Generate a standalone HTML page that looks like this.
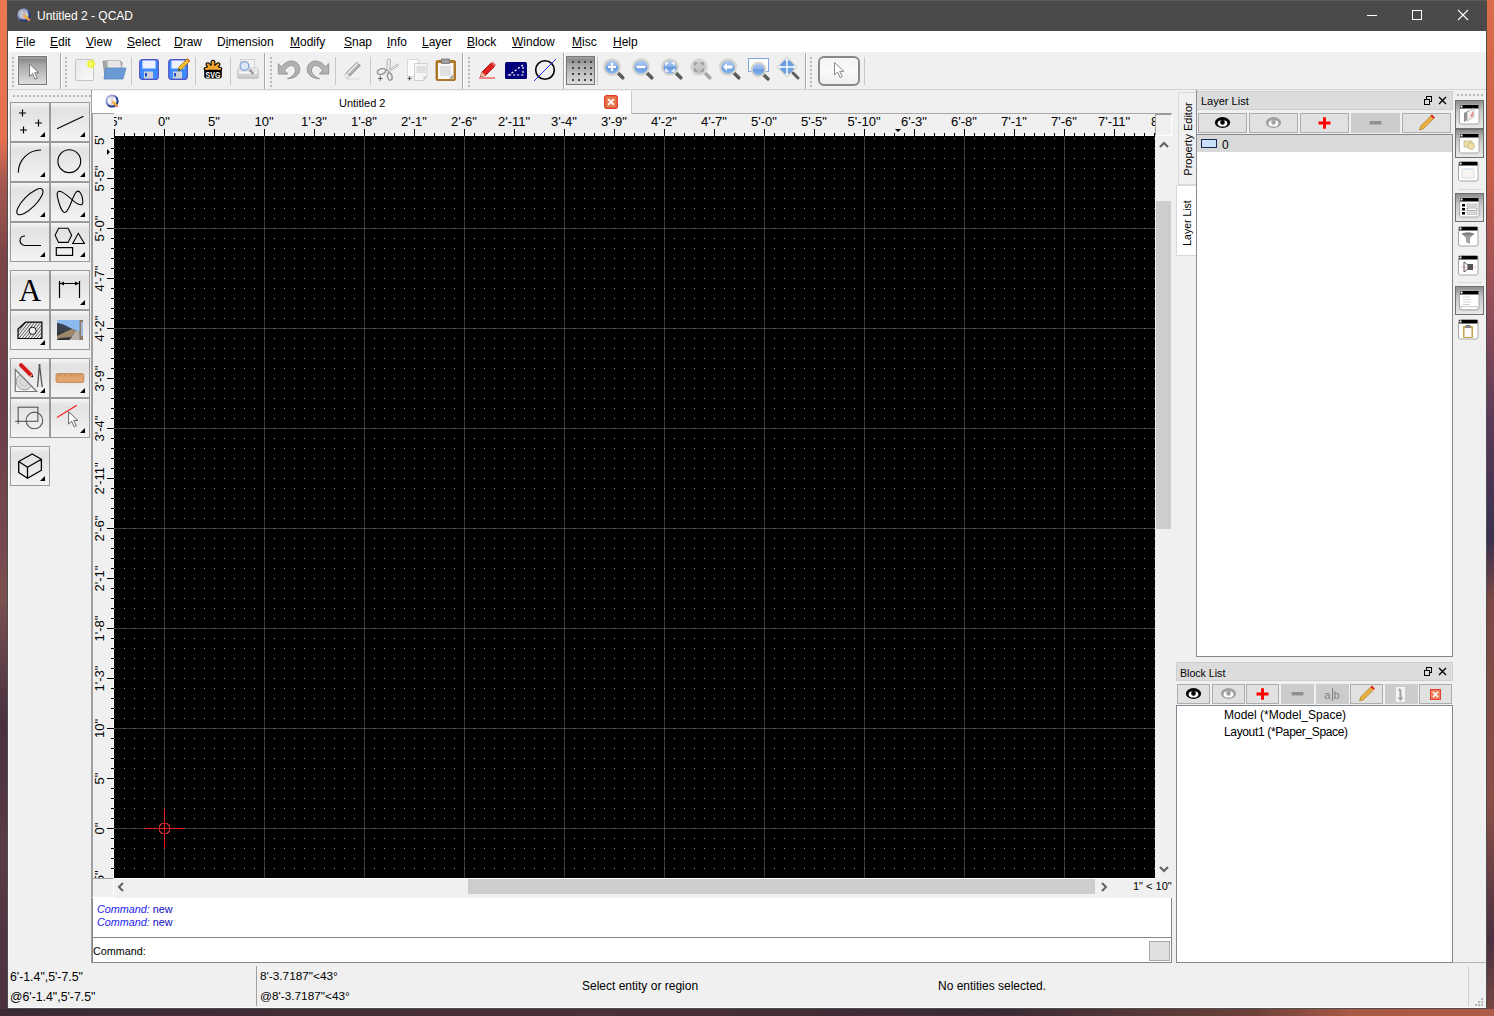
<!DOCTYPE html><html><head><meta charset="utf-8"><style>
*{margin:0;padding:0;box-sizing:border-box}
html,body{width:1494px;height:1016px;overflow:hidden}
body{position:relative;font-family:"Liberation Sans",sans-serif;font-size:12px;color:#000;background:#3d2a35}
div,svg{position:absolute}
.nw{white-space:nowrap;line-height:1}
u{text-decoration:underline;text-underline-offset:1px}
.tb{background:linear-gradient(#f6f6f6 0px,#e6e6e6 5px,#e2e2e2 8px,#f4f4f4 100%);border:1px solid #9a9a9a}
.lb{background:#e1e1e1;border:1px solid #adadad}
.lbd{background:#cccccc}
.hd{width:2px;height:2px;background:#b8b8b8}
</style></head><body>
<div style="left:0;top:0;width:7px;height:1016px;background:linear-gradient(#ec7850 0px,#e47050 140px,#a85850 180px,#7a4548 260px,#6a3c48 400px,#7a5050 600px,#4a3040 720px,#5a3a45 850px,#4a3040 1016px)"></div>
<div style="left:1487px;top:0;width:7px;height:1016px;background:linear-gradient(#da6c4a 0px,#c86048 170px,#9a5058 290px,#5a3a58 420px,#3a3050 540px,#7a4844 600px,#8a5048 800px,#4a3040 940px,#7a4840 1016px)"></div>
<div style="left:0;top:1009px;width:1494px;height:7px;background:linear-gradient(90deg,#3a2a35,#4a3038 600px,#3a2a35 1000px,#6a4038 1250px,#a85844 1350px,#b05a48)"></div>
<div style="left:7px;top:0;width:1480px;height:1009px;background:#f0f0f0;border:1px solid #4e4e4e;border-top:none"></div><div style="left:8px;top:31px;width:1px;height:977px;background:#fafafa"></div><div style="left:8px;top:1007px;width:1478px;height:1px;background:#fafafa"></div><div style="left:1453px;top:962px;width:33px;height:1px;background:#b4b4b4"></div>
<div style="left:7px;top:0;width:1480px;height:31px;background:#4b4a48;border-top:1px solid #5c5b59"></div>
<div class="nw" style="left:37px;top:10px;color:#fff;font-size:12px">Untitled 2 - QCAD</div>
<svg style="left:14px;top:5px" width="20" height="20"><defs><linearGradient id="qr" x1="0" y1="0" x2="1" y2="1"><stop offset="0" stop-color="#c4ccee"/><stop offset=".45" stop-color="#7080c0"/><stop offset=".6" stop-color="#24408c"/><stop offset="1" stop-color="#1a3070"/></linearGradient></defs><circle cx="10" cy="10" r="5.6" fill="#c8c8c8" stroke="url(#qr)" stroke-width="2"/><path d="M8 13h4M10 6v6" stroke="#d06060" stroke-width=".5"/><path d="M10.6 10.6L14.6 14.6" stroke="#f2b030" stroke-width="2.2"/><path d="M14.4 14.4l1.3 1.3" stroke="#f08078" stroke-width="2.3"/></svg>
<div style="left:1367px;top:15px;width:10px;height:1px;background:#fff"></div>
<div style="left:1412px;top:10px;width:10px;height:10px;border:1px solid #fff"></div>
<svg style="left:1457px;top:9px" width="12" height="12"><path d="M1 1L11 11M11 1L1 11" stroke="#fff" stroke-width="1.1"/></svg>
<div style="left:8px;top:31px;width:1478px;height:21px;background:#fff"></div>
<div class="nw" style="left:16px;top:36px;font-size:12px"><u>F</u>ile</div>
<div class="nw" style="left:50px;top:36px;font-size:12px"><u>E</u>dit</div>
<div class="nw" style="left:86px;top:36px;font-size:12px"><u>V</u>iew</div>
<div class="nw" style="left:127px;top:36px;font-size:12px"><u>S</u>elect</div>
<div class="nw" style="left:174px;top:36px;font-size:12px"><u>D</u>raw</div>
<div class="nw" style="left:217px;top:36px;font-size:12px">D<u>i</u>mension</div>
<div class="nw" style="left:290px;top:36px;font-size:12px"><u>M</u>odify</div>
<div class="nw" style="left:344px;top:36px;font-size:12px"><u>S</u>nap</div>
<div class="nw" style="left:387px;top:36px;font-size:12px"><u>I</u>nfo</div>
<div class="nw" style="left:422px;top:36px;font-size:12px"><u>L</u>ayer</div>
<div class="nw" style="left:467px;top:36px;font-size:12px"><u>B</u>lock</div>
<div class="nw" style="left:512px;top:36px;font-size:12px"><u>W</u>indow</div>
<div class="nw" style="left:572px;top:36px;font-size:12px"><u>M</u>isc</div>
<div class="nw" style="left:613px;top:36px;font-size:12px"><u>H</u>elp</div>
<div style="left:8px;top:89px;width:1478px;height:1px;background:#d4d4d4"></div>
<div class="hd" style="left:12px;top:57px"></div>
<div class="hd" style="left:12px;top:61px"></div>
<div class="hd" style="left:12px;top:65px"></div>
<div class="hd" style="left:12px;top:69px"></div>
<div class="hd" style="left:12px;top:73px"></div>
<div class="hd" style="left:12px;top:77px"></div>
<div class="hd" style="left:12px;top:81px"></div>
<div class="hd" style="left:12px;top:85px"></div>
<div class="hd" style="left:65px;top:57px"></div>
<div class="hd" style="left:65px;top:61px"></div>
<div class="hd" style="left:65px;top:65px"></div>
<div class="hd" style="left:65px;top:69px"></div>
<div class="hd" style="left:65px;top:73px"></div>
<div class="hd" style="left:65px;top:77px"></div>
<div class="hd" style="left:65px;top:81px"></div>
<div class="hd" style="left:65px;top:85px"></div>
<div class="hd" style="left:270px;top:57px"></div>
<div class="hd" style="left:270px;top:61px"></div>
<div class="hd" style="left:270px;top:65px"></div>
<div class="hd" style="left:270px;top:69px"></div>
<div class="hd" style="left:270px;top:73px"></div>
<div class="hd" style="left:270px;top:77px"></div>
<div class="hd" style="left:270px;top:81px"></div>
<div class="hd" style="left:270px;top:85px"></div>
<div class="hd" style="left:468px;top:57px"></div>
<div class="hd" style="left:468px;top:61px"></div>
<div class="hd" style="left:468px;top:65px"></div>
<div class="hd" style="left:468px;top:69px"></div>
<div class="hd" style="left:468px;top:73px"></div>
<div class="hd" style="left:468px;top:77px"></div>
<div class="hd" style="left:468px;top:81px"></div>
<div class="hd" style="left:468px;top:85px"></div>
<div class="hd" style="left:810px;top:57px"></div>
<div class="hd" style="left:810px;top:61px"></div>
<div class="hd" style="left:810px;top:65px"></div>
<div class="hd" style="left:810px;top:69px"></div>
<div class="hd" style="left:810px;top:73px"></div>
<div class="hd" style="left:810px;top:77px"></div>
<div class="hd" style="left:810px;top:81px"></div>
<div class="hd" style="left:810px;top:85px"></div>
<div style="left:60px;top:53px;width:1px;height:36px;background:#a8a8a8"></div><div style="left:61px;top:53px;width:1px;height:36px;background:#fff"></div>
<div style="left:264px;top:53px;width:1px;height:36px;background:#a8a8a8"></div><div style="left:265px;top:53px;width:1px;height:36px;background:#fff"></div>
<div style="left:462px;top:53px;width:1px;height:36px;background:#a8a8a8"></div><div style="left:463px;top:53px;width:1px;height:36px;background:#fff"></div>
<div style="left:563px;top:53px;width:1px;height:36px;background:#a8a8a8"></div><div style="left:564px;top:53px;width:1px;height:36px;background:#fff"></div>
<div style="left:805px;top:53px;width:1px;height:36px;background:#a8a8a8"></div><div style="left:806px;top:53px;width:1px;height:36px;background:#fff"></div>
<div style="left:131px;top:57px;width:1px;height:28px;background:#c8c8c8"></div>
<div style="left:195px;top:57px;width:1px;height:28px;background:#c8c8c8"></div>
<div style="left:230px;top:57px;width:1px;height:28px;background:#c8c8c8"></div>
<div style="left:335px;top:57px;width:1px;height:28px;background:#c8c8c8"></div>
<div style="left:370px;top:57px;width:1px;height:28px;background:#c8c8c8"></div>
<div style="left:597px;top:57px;width:1px;height:28px;background:#c8c8c8"></div>
<div style="left:864px;top:57px;width:1px;height:28px;background:#c8c8c8"></div>
<div style="left:18px;top:56px;width:29px;height:29px;border:1px solid #777;background:linear-gradient(#a4a4a4 0px,#8c8c8c 3px,#a8a8a8 8px,#dedede 100%);box-shadow:0 0 0 1px #fafafa"></div>
<svg style="left:18px;top:56px" width="29" height="29" ><path d="M11.5 8v12.5l3-3 2.6 5.6 2.2-1-2.6-5.3h4.2z" fill="#fff" stroke="#777" stroke-width="1" stroke-linejoin="round"/></svg>
<svg style="left:74px;top:58px" width="22" height="24" ><defs><linearGradient id="nd" x1="0" y1="0" x2="1" y2="1"><stop offset="0" stop-color="#e8e8e8"/><stop offset="1" stop-color="#fafafa"/></linearGradient><radialGradient id="sun"><stop offset="0" stop-color="#ffffc0"/><stop offset=".5" stop-color="#f0f020"/><stop offset="1" stop-color="#f0f020" stop-opacity="0"/></radialGradient></defs><rect x="1.5" y="1.5" width="18" height="21" rx="1" fill="url(#nd)" stroke="#c4c4c4"/><circle cx="17" cy="6" r="5" fill="url(#sun)"/></svg>
<svg style="left:101px;top:58px" width="26" height="24" ><path d="M2 3h6l1 1h12l-1 15H4z" fill="#a8a8a8" stroke="#8a8a8a" stroke-width=".8"/><path d="M6 2.5h13.5l1 8h-14z" fill="#e6e6e6" stroke="#b0b0b0" stroke-width=".8"/><path d="M4.5 10h20.5l-3 11h-19z" fill="#6a9ad4" stroke="#5a88c0" stroke-width=".8"/></svg>
<svg style="left:139px;top:59px" width="20" height="21" ><rect x="0.7" y="0.7" width="18.6" height="19.6" rx="2.5" fill="#3c8cff" stroke="#5050c4" stroke-width="1.2"/><rect x="3.5" y="1.5" width="13" height="8" fill="#eef0ff"/><rect x="5" y="12.5" width="9" height="7" fill="#d0d0d8"/><rect x="6" y="14" width="2" height="3.5" fill="#2050d0"/></svg>
<svg style="left:168px;top:59px" width="20" height="21" ><rect x="0.7" y="0.7" width="18.6" height="19.6" rx="2.5" fill="#3c8cff" stroke="#5050c4" stroke-width="1.2"/><rect x="3.5" y="1.5" width="13" height="8" fill="#eef0ff"/><rect x="5" y="12.5" width="9" height="7" fill="#d0d0d8"/><rect x="6" y="14" width="2" height="3.5" fill="#2050d0"/></svg>
<svg style="left:176px;top:57px" width="15" height="16" ><path d="M2 14L3 10L11.5 1.5L14 4L5.5 12.5Z" fill="#f0c030" stroke="#a07010" stroke-width=".8"/><path d="M11.5 1.5L14 4L13 5L10.5 2.5Z" fill="#e87050"/><path d="M2 14L3 11.5L4.5 13Z" fill="#333"/></svg>
<svg style="left:200px;top:57px" width="26" height="26" ><rect x="4.2" y="10.5" width="17.6" height="11" rx="2.2" fill="#000"/><g fill="#f5a630" stroke="#000" stroke-width="1.1"><ellipse cx="13" cy="6.3" rx="2" ry="3"/><ellipse cx="8.6" cy="8.3" rx="1.8" ry="2.9" transform="rotate(-45 8.6 8.3)"/><ellipse cx="17.4" cy="8.3" rx="1.8" ry="2.9" transform="rotate(45 17.4 8.3)"/><ellipse cx="6.8" cy="11.8" rx="2.6" ry="1.5"/><ellipse cx="19.2" cy="11.8" rx="2.6" ry="1.5"/></g><path d="M5 12.8h16l-3.5-3.2-4.5-1.8-4.5 1.8z" fill="#f5a630"/><text transform="translate(13 20.8) scale(.82 1.12)" font-family="Liberation Sans" font-weight="bold" font-size="8.6" fill="#fff" text-anchor="middle">SVG</text></svg>
<svg style="left:234px;top:56px" width="28" height="28" ><defs><linearGradient id="pr" x1="0" y1="0" x2="0" y2="1"><stop offset="0" stop-color="#f0f0f0"/><stop offset="1" stop-color="#c4c4c4"/></linearGradient></defs><rect x="6.5" y="3.5" width="14" height="10" fill="#f2f2f2" stroke="#cfcfcf"/><rect x="3.5" y="12" width="21" height="10.5" rx="2" fill="url(#pr)" stroke="#c0c0c0" stroke-width=".8"/><rect x="5" y="16" width="18" height="1.5" fill="#f8f8f8"/><path d="M15.5 13.5l4 4.5" stroke="#9c9c9c" stroke-width="2.6"/><circle cx="10.5" cy="10" r="4.4" fill="#dce8f6" stroke="#7aa0d8" stroke-width="1.3"/></svg>
<svg style="left:276px;top:57px" width="26" height="26" ><path d="M2.3 6.6L5.5 10C8 6.5 11.5 4 15.5 4C20 4 23.8 7.5 23.8 12.5C23.8 17.5 19 21.5 11.5 21.7C16 20 19.5 17 19.5 13.5C19.5 10.5 17.5 8.5 15.5 8.5C12.5 8.5 10.5 10.5 8.5 13.5L11.8 17H2.3Z" fill="#b2b2b2" stroke="#8e8e8e" stroke-width=".9" stroke-linejoin="round"/></svg>
<svg style="left:305px;top:57px" width="26" height="26" ><g transform="translate(26,0) scale(-1,1)"><path d="M2.3 6.6L5.5 10C8 6.5 11.5 4 15.5 4C20 4 23.8 7.5 23.8 12.5C23.8 17.5 19 21.5 11.5 21.7C16 20 19.5 17 19.5 13.5C19.5 10.5 17.5 8.5 15.5 8.5C12.5 8.5 10.5 10.5 8.5 13.5L11.8 17H2.3Z" fill="#b2b2b2" stroke="#8e8e8e" stroke-width=".9" stroke-linejoin="round"/></g></svg>
<svg style="left:342px;top:59px" width="22" height="22" ><path d="M4 14L15 3l3.5 3.5L7.5 17.5z" fill="#b0b0b0" stroke="#909090" stroke-width=".8"/><path d="M5.5 14.5L16 4" stroke="#f4f4f4" stroke-width="1.4"/><path d="M4 14l3.5 3.5-2.5 1.5-2.5-2.5z" fill="#f8f8f8" stroke="#b8b8b8" stroke-width=".8"/><path d="M4 20h14" stroke="#dcdcdc" stroke-width="1.2"/></svg>
<svg style="left:374px;top:56px" width="28" height="28" ><path d="M13 13.5L13.2 4C13.5 2.8 16.5 2.8 16.6 4L15.7 14" fill="#f2f2f2" stroke="#a8a8a8" stroke-width=".9"/><path d="M15.5 13.5L23 8c1-.5 1.8.8 1 1.8L16 15" fill="#f2f2f2" stroke="#a8a8a8" stroke-width=".9"/><ellipse cx="7.5" cy="15.5" rx="4.3" ry="2.6" transform="rotate(-20 7.5 15.5)" fill="none" stroke="#9a9a9a" stroke-width="1.5"/><path d="M11.5 14.5L14 14M14.5 14.5L15 17" stroke="#9a9a9a" stroke-width="1.5"/><ellipse cx="15.8" cy="20.5" rx="2.2" ry="3.7" transform="rotate(-15 15.8 20.5)" fill="none" stroke="#9a9a9a" stroke-width="1.5"/><path d="M4 22.5h4.6M6.3 20.2v4.6" stroke="#666" stroke-width="1.1"/></svg>
<svg style="left:405px;top:58px" width="25" height="25" ><path d="M2.5 1.5h11v17h-11z" fill="#fbfbfb" stroke="#d8d8d8"/><path d="M9.5 5.5h12.5v13l-3.5 4H9.5z" fill="#f6f6f6" stroke="#d0d0d0"/><rect x="11.5" y="8" width="9" height="7" fill="#e0e0e0"/><path d="M18.5 22.5v-4h3.5z" fill="#c8c8c8"/><path d="M2.5 20.5h4M4.5 18.5v4" stroke="#555" stroke-width="1.1"/></svg>
<svg style="left:435px;top:57px" width="22" height="25" ><rect x="1" y="3.5" width="19.5" height="20" rx="1.5" fill="#b47a22" stroke="#9a6418" stroke-width=".8"/><rect x="3" y="6" width="15.5" height="16" fill="#f8f8f8"/><rect x="5" y="9" width="11" height="10" fill="#e0e0e0"/><path d="M6.5 2h8v4.5h-8z" fill="#a0a0a0" stroke="#707070" stroke-width=".8"/><path d="M14 21.5l4-4v4z" fill="#a0a0a0"/></svg>
<svg style="left:478px;top:60px" width="19" height="20" ><path d="M2.5 16.5L4 12 13 3l3.5 3.5-9 9z" fill="#e02020" stroke="#901010" stroke-width=".8"/><path d="M13 3l1.5-1.5 3.5 3.5-1.5 1.5z" fill="#f06060"/><path d="M2.5 16.5L4 12l3.5 3.5z" fill="#f0c090"/><path d="M1 18h16" stroke="#f04040" stroke-width="1.2"/></svg>
<svg style="left:505px;top:62px" width="22" height="17" ><rect x="0" y="0" width="22" height="17" rx="1.5" fill="#00007a"/><path d="M4 13h14V3z" fill="none" stroke="#fff" stroke-width="1.2" stroke-dasharray="2.2 1.8"/></svg>
<svg style="left:533px;top:58px" width="24" height="24" ><circle cx="12" cy="12" r="9.3" fill="none" stroke="#000" stroke-width="1.6"/><path d="M1 23L23 1" stroke="#2a2aff" stroke-width="1"/></svg>
<div style="left:566px;top:56px;width:29px;height:29px;border:1px solid #777;background:linear-gradient(#a4a4a4 0px,#8c8c8c 3px,#a8a8a8 8px,#dedede 100%)"></div>
<div style="left:572px;top:61px;width:2px;height:2px;background:#444"></div>
<div style="left:578px;top:61px;width:2px;height:2px;background:#444"></div>
<div style="left:584px;top:61px;width:2px;height:2px;background:#444"></div>
<div style="left:590px;top:61px;width:2px;height:2px;background:#444"></div>
<div style="left:572px;top:67px;width:2px;height:2px;background:#444"></div>
<div style="left:578px;top:67px;width:2px;height:2px;background:#444"></div>
<div style="left:584px;top:67px;width:2px;height:2px;background:#444"></div>
<div style="left:590px;top:67px;width:2px;height:2px;background:#444"></div>
<div style="left:572px;top:73px;width:2px;height:2px;background:#444"></div>
<div style="left:578px;top:73px;width:2px;height:2px;background:#444"></div>
<div style="left:584px;top:73px;width:2px;height:2px;background:#444"></div>
<div style="left:590px;top:73px;width:2px;height:2px;background:#444"></div>
<div style="left:572px;top:79px;width:2px;height:2px;background:#444"></div>
<div style="left:578px;top:79px;width:2px;height:2px;background:#444"></div>
<div style="left:584px;top:79px;width:2px;height:2px;background:#444"></div>
<div style="left:590px;top:79px;width:2px;height:2px;background:#444"></div>
<svg width="0" height="0" style="left:0;top:0"><defs><linearGradient id="lg" x1="0" y1="0" x2="0" y2="1"><stop offset="0" stop-color="#b4d0f4"/><stop offset=".45" stop-color="#8cb2e8"/><stop offset=".52" stop-color="#6898de"/><stop offset="1" stop-color="#8cbcf2"/></linearGradient><linearGradient id="lgg" x1="0" y1="0" x2="0" y2="1"><stop offset="0" stop-color="#d4d4d4"/><stop offset="1" stop-color="#bcbcbc"/></linearGradient></defs></svg>
<svg style="left:601px;top:56px" width="26" height="26" ><path d="M17.2 17.2l4.6 4.6" stroke="#5a5e5a" stroke-width="3.6" stroke-linecap="round"/><circle cx="11" cy="11" r="7.7" fill="url(#lg)" stroke="#d4d4cc" stroke-width="2.2"/><path d="M7 11h8M11 7v8" stroke="#fff" stroke-width="2.2"/></svg>
<svg style="left:630px;top:56px" width="26" height="26" ><path d="M17.2 17.2l4.6 4.6" stroke="#5a5e5a" stroke-width="3.6" stroke-linecap="round"/><circle cx="11" cy="11" r="7.7" fill="url(#lg)" stroke="#d4d4cc" stroke-width="2.2"/><path d="M6.5 11h9" stroke="#fff" stroke-width="2.4"/></svg>
<svg style="left:659px;top:56px" width="26" height="26" ><path d="M17.2 17.2l4.6 4.6" stroke="#5a5e5a" stroke-width="3.6" stroke-linecap="round"/><circle cx="11" cy="11" r="7.7" fill="url(#lg)" stroke="#d4d4cc" stroke-width="2.2"/><path d="M7 9.5V7h2.5M12.5 7H15v2.5M15 12.5V15h-2.5M9.5 15H7v-2.5" fill="none" stroke="#fff" stroke-width="1.4"/></svg>
<svg style="left:688px;top:56px" width="26" height="26" ><path d="M17.2 17.2l4.6 4.6" stroke="#a8a8a8" stroke-width="3.6" stroke-linecap="round"/><circle cx="11" cy="11" r="7.7" fill="url(#lgg)" stroke="#d8d8d8" stroke-width="2.2"/><path d="M7 9.5V7h2.5M12.5 7H15v2.5M15 12.5V15h-2.5M9.5 15H7v-2.5" fill="none" stroke="#9a9a9a" stroke-width="1.6"/></svg>
<svg style="left:717px;top:56px" width="26" height="26" ><path d="M17.2 17.2l4.6 4.6" stroke="#5a5e5a" stroke-width="3.6" stroke-linecap="round"/><circle cx="11" cy="11" r="7.7" fill="url(#lg)" stroke="#d4d4cc" stroke-width="2.2"/><path d="M6 11l4-4v2.5h5.5v3H10V15z" fill="#fff"/></svg>
<svg style="left:747px;top:57px" width="24" height="25" ><rect x="1.5" y="1.5" width="20" height="13" fill="#fff" stroke="#80a8e0"/><path d="M16.5 17.5l4.5 4.5" stroke="#5a5e5a" stroke-width="3.4" stroke-linecap="round"/><circle cx="11.5" cy="12.5" r="6.8" fill="url(#lg)" stroke="#d4d4cc" stroke-width="2"/></svg>
<svg style="left:775px;top:56px" width="26" height="26" ><path d="M12 1l10 10-10 10L2 11z" fill="#6a9ee0" stroke="#d8d8d0" stroke-width="1.2"/><path d="M12 3v16M4 11h16" stroke="#fff" stroke-width="1.4"/><path d="M12 1.5l-2 3h4zM12 20.5l-2-3h4zM2.5 11l3-2v4zM21.5 11l-3-2v4z" fill="#fff"/><path d="M18 17l5 5" stroke="#5c615c" stroke-width="3" stroke-linecap="round"/></svg>
<div style="left:818px;top:56px;width:42px;height:30px;border:2px solid #888;border-radius:6px;background:linear-gradient(#f4f4f4,#fafafa 50%,#eeeeee)"></div>
<svg style="left:818px;top:56px" width="42" height="30" ><path d="M16.5 6.5v12.5l3-3 2.6 5.6 2.2-1-2.6-5.3h4.2z" fill="#fff" stroke="#888" stroke-width="1" stroke-linejoin="round"/></svg>
<div class="hd" style="left:13px;top:95px"></div>
<div class="hd" style="left:17px;top:95px"></div>
<div class="hd" style="left:21px;top:95px"></div>
<div class="hd" style="left:25px;top:95px"></div>
<div class="hd" style="left:29px;top:95px"></div>
<div class="hd" style="left:33px;top:95px"></div>
<div class="hd" style="left:37px;top:95px"></div>
<div class="hd" style="left:41px;top:95px"></div>
<div class="hd" style="left:45px;top:95px"></div>
<div class="hd" style="left:49px;top:95px"></div>
<div class="hd" style="left:53px;top:95px"></div>
<div class="hd" style="left:57px;top:95px"></div>
<div class="hd" style="left:61px;top:95px"></div>
<div class="hd" style="left:65px;top:95px"></div>
<div class="hd" style="left:69px;top:95px"></div>
<div class="hd" style="left:73px;top:95px"></div>
<div class="hd" style="left:77px;top:95px"></div>
<div class="hd" style="left:81px;top:95px"></div>
<div class="hd" style="left:85px;top:95px"></div>
<div class="hd" style="left:89px;top:95px"></div>
<div class="tb" style="left:10px;top:102px;width:40px;height:40px"></div>
<svg style="left:10px;top:102px" width="40" height="40" ><path d="M9 11h7M12.5 7.5v7M25 21h7M28.5 17.5v7M10 28h7M13.5 24.5v7" stroke="#000" stroke-width="1.2"/><path d="M30 35h5v-5z" fill="#000"/></svg>
<div class="tb" style="left:50px;top:102px;width:40px;height:40px"></div>
<svg style="left:50px;top:102px" width="40" height="40" ><path d="M7 26.8L33.5 14.3" stroke="#000" fill="none" stroke-width="1.1"/><path d="M30 35h5v-5z" fill="#000"/></svg>
<div class="tb" style="left:10px;top:142px;width:40px;height:40px"></div>
<svg style="left:10px;top:142px" width="40" height="40" ><path d="M8.3 30.7A22.5 22.5 0 0 1 31 8" stroke="#000" fill="none" stroke-width="1.1"/><path d="M30 35h5v-5z" fill="#000"/></svg>
<div class="tb" style="left:50px;top:142px;width:40px;height:40px"></div>
<svg style="left:50px;top:142px" width="40" height="40" ><circle cx="19.3" cy="19.2" r="11.4" stroke="#000" fill="none" stroke-width="1.1"/><path d="M30 35h5v-5z" fill="#000"/></svg>
<div class="tb" style="left:10px;top:182px;width:40px;height:40px"></div>
<svg style="left:10px;top:182px" width="40" height="40" ><ellipse cx="19.9" cy="19.7" rx="17.5" ry="6" transform="rotate(-45 19.9 19.7)" stroke="#000" fill="none" stroke-width="1.1"/><path d="M30 35h5v-5z" fill="#000"/></svg>
<div class="tb" style="left:50px;top:182px;width:40px;height:40px"></div>
<svg style="left:50px;top:182px" width="40" height="40" ><path d="M9.5 9.3C13 9.5 19 15 22.8 18.3C26 21 29 23 31.5 22.7C34 22 32.5 14 30.5 11C29 8.5 27 8.5 25.5 11C22 16 19 30 14.8 30.5C12 30.5 9 22 7.5 15C6.5 11 7.5 9.3 9.5 9.3Z" stroke="#000" fill="none" stroke-width="1.1"/><path d="M30 35h5v-5z" fill="#000"/></svg>
<div class="tb" style="left:10px;top:222px;width:40px;height:40px"></div>
<svg style="left:10px;top:222px" width="40" height="40" ><path d="M15 14c-3 0-5 2-5 4.5s2.3 5 4.5 5H31" stroke="#000" fill="none" stroke-width="1.2"/><path d="M30 35h5v-5z" fill="#000"/></svg>
<div class="tb" style="left:50px;top:222px;width:40px;height:40px"></div>
<svg style="left:50px;top:222px" width="40" height="40" ><path d="M5.1 13.35L8.6 6.3H18.1L21.6 13.35 18.1 20.4H8.6Z" stroke="#000" fill="none" stroke-width="1.1"/><path d="M22.7 21.5H34.4L28.3 11.3z" stroke="#000" fill="none" stroke-width="1.1"/><rect x="6.3" y="25.6" width="16.3" height="7.8" stroke="#000" fill="none" stroke-width="1.2"/><path d="M30 35h5v-5z" fill="#000"/></svg>
<div class="tb" style="left:10px;top:270px;width:40px;height:40px"></div>
<svg style="left:10px;top:270px" width="40" height="40" ><text x="20" y="31" font-family="Liberation Serif" font-size="31" text-anchor="middle" fill="#000">A</text></svg>
<div class="tb" style="left:50px;top:270px;width:40px;height:40px"></div>
<svg style="left:50px;top:270px" width="40" height="40" ><path d="M9.5 11v17M29.5 11v17M10 13.5h19" stroke="#000" stroke-width="1.2" fill="none"/><path d="M10 13.5l4-2v4zM29 13.5l-4-2v4z" fill="#000"/><path d="M30 35h5v-5z" fill="#000"/></svg>
<div class="tb" style="left:10px;top:310px;width:40px;height:40px"></div>
<svg style="left:10px;top:310px" width="40" height="40" ><defs><clipPath id="hc"><path d="M8 19L15.6 12.2H31.9V28.5H8z"/></clipPath></defs><g clip-path="url(#hc)"><path d="M0 32L16 12" stroke="#000" stroke-width=".6"/><path d="M3 32L19 12" stroke="#000" stroke-width=".6"/><path d="M6 32L22 12" stroke="#000" stroke-width=".6"/><path d="M9 32L25 12" stroke="#000" stroke-width=".6"/><path d="M12 32L28 12" stroke="#000" stroke-width=".6"/><path d="M15 32L31 12" stroke="#000" stroke-width=".6"/><path d="M18 32L34 12" stroke="#000" stroke-width=".6"/><path d="M21 32L37 12" stroke="#000" stroke-width=".6"/><path d="M24 32L40 12" stroke="#000" stroke-width=".6"/><path d="M27 32L43 12" stroke="#000" stroke-width=".6"/><path d="M30 32L46 12" stroke="#000" stroke-width=".6"/><path d="M33 32L49 12" stroke="#000" stroke-width=".6"/></g><path d="M8 19L15.6 12.2H31.9V28.5H8z" fill="none" stroke="#000" stroke-width="1.2"/><circle cx="22.6" cy="20.8" r="3.6" fill="#f0f0f0" stroke="#000" stroke-width=".9"/><path d="M30 35h5v-5z" fill="#000"/></svg>
<div class="tb" style="left:50px;top:310px;width:40px;height:40px"></div>
<svg style="left:50px;top:310px" width="40" height="40" ><rect x="7" y="10" width="26" height="20" fill="#2c323a"/><path d="M7 10H30V22L21 18.5 13 14.5 7 13Z" fill="#8cbaee"/><path d="M7 13L13 14.5 21 18.5 24 20 7 22Z" fill="#3a4250"/><path d="M7 26L15 22 22 19 26 20.5 20 28 7 29Z" fill="#9c8868"/><path d="M19 30L26 20.5 29.5 21.5 30.5 30Z" fill="#b4b0a8"/><rect x="29.5" y="10" width="3.5" height="20" fill="#8a7a66"/><rect x="31" y="12" width="2" height="14" fill="#a0b8d8"/><path d="M10 28L22 27 19 30H7Z" fill="#30343a"/></svg>
<div class="tb" style="left:10px;top:358px;width:40px;height:40px"></div>
<svg style="left:10px;top:358px" width="40" height="40" ><path d="M5.3 11.5V33.5H26.8Z" fill="#f2f2f2"/><defs><clipPath id="trc"><path d="M5.3 11.5V33.5H26.8Z"/></clipPath></defs><g clip-path="url(#trc)"><circle cx="14.5" cy="23.5" r="8.3" fill="#dcdcdc" stroke="#9a9a9a" stroke-width="1"/><circle cx="14.5" cy="23.5" r="4.5" fill="none" stroke="#c0c0c0" stroke-width=".8"/></g><path d="M5.3 11.5V33.5H26.8Z" fill="none" stroke="#7a7a7a" stroke-width="1.2"/><path d="M11 7.2L21 17.2" stroke="#d81818" stroke-width="4" stroke-linecap="round"/><path d="M19.5 18.5l2-2 1.8 2.2z" fill="#f0c8a8"/><circle cx="22.3" cy="18.3" r=".9" fill="#000"/><path d="M29.5 6.5L27.5 29M29.5 6.5L32.2 29" stroke="#555" stroke-width="1.3" fill="none"/><circle cx="29.5" cy="7" r="1.1" fill="#555"/><path d="M30 35h5v-5z" fill="#000"/></svg>
<div class="tb" style="left:50px;top:358px;width:40px;height:40px"></div>
<svg style="left:50px;top:358px" width="40" height="40" ><rect x="6" y="15.6" width="27.8" height="8.9" rx="1.5" fill="#e0a46c" stroke="#b88050" stroke-width=".8"/><path d="M9 16v2.5M12 16v1.5M15 16v2.5M18 16v1.5M21 16v2.5M24 16v1.5M27 16v2.5M30 16v1.5" stroke="#b07848" stroke-width=".8"/><path d="M30 35h5v-5z" fill="#000"/></svg>
<div class="tb" style="left:10px;top:398px;width:40px;height:40px"></div>
<svg style="left:10px;top:398px" width="40" height="40" ><rect x="8.2" y="9.2" width="19.7" height="14.1" fill="none" stroke="#555" stroke-width="1.1"/><circle cx="24.4" cy="22.4" r="8.3" fill="none" stroke="#555" stroke-width="1.1"/><path d="M5 23.3h4M8.2 22v4" stroke="#555" stroke-width="1"/></svg>
<div class="tb" style="left:50px;top:398px;width:40px;height:40px"></div>
<svg style="left:50px;top:398px" width="40" height="40" ><path d="M7 19.4L26.8 7.2" stroke="#ff2020" stroke-width="1.2"/><path d="M18.6 13.7v12.5l3-3 2.6 5.6 2.2-1-2.6-5.3h4.2z" fill="#fff" stroke="#666" stroke-width="1" stroke-linejoin="round"/><path d="M30 35h5v-5z" fill="#000"/></svg>
<div class="tb" style="left:10px;top:446px;width:40px;height:40px"></div>
<svg style="left:10px;top:446px" width="40" height="40" ><path d="M22.2 8L8.7 15.5V26.5L17.5 32.2 31.4 24.3V13.3z M8.7 15.5L17.5 21.2 31.4 13.3 M17.5 21.2V32.2" fill="none" stroke="#000" stroke-width="1.3" stroke-linejoin="round"/><path d="M30 35h5v-5z" fill="#000"/></svg>
<div style="left:91px;top:90px;width:1px;height:873px;background:#a0a0a0"></div>
<div style="left:92px;top:91px;width:539px;height:23px;background:#fff"></div>
<svg style="left:102px;top:91px" width="20" height="20"><defs><linearGradient id="qr2" x1="0" y1="0" x2="1" y2="1"><stop offset="0" stop-color="#c4ccee"/><stop offset=".45" stop-color="#7080c0"/><stop offset=".6" stop-color="#24408c"/><stop offset="1" stop-color="#1a3070"/></linearGradient></defs><circle cx="10" cy="10" r="5.6" fill="#f4f4f4" stroke="url(#qr2)" stroke-width="2"/><path d="M8 13h4M10 6v6" stroke="#d06060" stroke-width=".5"/><path d="M10.6 10.6L14.6 14.6" stroke="#f2b030" stroke-width="2.2"/><path d="M14.4 14.4l1.3 1.3" stroke="#f08078" stroke-width="2.3"/></svg>
<div class="nw" style="left:339px;top:98px;font-size:11px">Untitled 2</div>
<svg style="left:604px;top:95px" width="14" height="14" ><rect x=".7" y=".7" width="12.6" height="12.6" rx="2" fill="#e8784e" stroke="#e03c24" stroke-width="1.3"/><path d="M4.2 4.2L9.8 9.8M9.8 4.2L4.2 9.8" stroke="#fff" stroke-width="1.9"/></svg>
<svg style="left:114px;top:136px" width="1041" height="742" shape-rendering="crispEdges"><defs><pattern id="dots" x="0" y="0" width="10" height="10" patternUnits="userSpaceOnUse"><rect x="0" y="2" width="1" height="1" fill="#8c8c8c"/></pattern></defs><rect width="1041" height="742" fill="#000"/><rect x="50" y="0" width="1" height="742" fill="#383838"/><rect x="150" y="0" width="1" height="742" fill="#383838"/><rect x="250" y="0" width="1" height="742" fill="#383838"/><rect x="350" y="0" width="1" height="742" fill="#383838"/><rect x="450" y="0" width="1" height="742" fill="#383838"/><rect x="550" y="0" width="1" height="742" fill="#383838"/><rect x="650" y="0" width="1" height="742" fill="#383838"/><rect x="750" y="0" width="1" height="742" fill="#383838"/><rect x="850" y="0" width="1" height="742" fill="#383838"/><rect x="950" y="0" width="1" height="742" fill="#383838"/><rect x="0" y="92" width="1041" height="1" fill="#383838"/><rect x="0" y="192" width="1041" height="1" fill="#383838"/><rect x="0" y="292" width="1041" height="1" fill="#383838"/><rect x="0" y="392" width="1041" height="1" fill="#383838"/><rect x="0" y="492" width="1041" height="1" fill="#383838"/><rect x="0" y="592" width="1041" height="1" fill="#383838"/><rect x="0" y="692" width="1041" height="1" fill="#383838"/><rect x="30" y="692" width="41" height="1" fill="#e81010"/><rect x="50" y="672" width="1" height="41" fill="#e81010"/><circle cx="50.5" cy="692.5" r="5.5" fill="none" stroke="#b83030" stroke-width="1"/><rect x="0" width="1041" height="742" fill="url(#dots)"/></svg>
<div style="left:92px;top:114px;width:1064px;height:22px;background:#f0f0f0"></div>
<div style="left:114px;top:114px;width:1041px;height:22px;overflow:hidden"><div class="nw" style="left:-40px;top:1px;width:80px;text-align:center;font-size:13px">-5"</div><div class="nw" style="left:10px;top:1px;width:80px;text-align:center;font-size:13px">0"</div><div class="nw" style="left:60px;top:1px;width:80px;text-align:center;font-size:13px">5"</div><div class="nw" style="left:110px;top:1px;width:80px;text-align:center;font-size:13px">10"</div><div class="nw" style="left:160px;top:1px;width:80px;text-align:center;font-size:13px">1'-3"</div><div class="nw" style="left:210px;top:1px;width:80px;text-align:center;font-size:13px">1'-8"</div><div class="nw" style="left:260px;top:1px;width:80px;text-align:center;font-size:13px">2'-1"</div><div class="nw" style="left:310px;top:1px;width:80px;text-align:center;font-size:13px">2'-6"</div><div class="nw" style="left:360px;top:1px;width:80px;text-align:center;font-size:13px">2'-11"</div><div class="nw" style="left:410px;top:1px;width:80px;text-align:center;font-size:13px">3'-4"</div><div class="nw" style="left:460px;top:1px;width:80px;text-align:center;font-size:13px">3'-9"</div><div class="nw" style="left:510px;top:1px;width:80px;text-align:center;font-size:13px">4'-2"</div><div class="nw" style="left:560px;top:1px;width:80px;text-align:center;font-size:13px">4'-7"</div><div class="nw" style="left:610px;top:1px;width:80px;text-align:center;font-size:13px">5'-0"</div><div class="nw" style="left:660px;top:1px;width:80px;text-align:center;font-size:13px">5'-5"</div><div class="nw" style="left:710px;top:1px;width:80px;text-align:center;font-size:13px">5'-10"</div><div class="nw" style="left:760px;top:1px;width:80px;text-align:center;font-size:13px">6'-3"</div><div class="nw" style="left:810px;top:1px;width:80px;text-align:center;font-size:13px">6'-8"</div><div class="nw" style="left:860px;top:1px;width:80px;text-align:center;font-size:13px">7'-1"</div><div class="nw" style="left:910px;top:1px;width:80px;text-align:center;font-size:13px">7'-6"</div><div class="nw" style="left:960px;top:1px;width:80px;text-align:center;font-size:13px">7'-11"</div><div class="nw" style="left:1010px;top:1px;width:80px;text-align:center;font-size:13px">8'-4"</div></div>
<svg style="left:114px;top:114px" width="1042" height="22" shape-rendering="crispEdges"><rect x="0" y="21" width="1042" height="1" fill="#fff"/><rect x="0" y="15" width="1" height="7" fill="#000"/><rect x="10" y="19" width="1" height="3" fill="#000"/><rect x="20" y="19" width="1" height="3" fill="#000"/><rect x="30" y="19" width="1" height="3" fill="#000"/><rect x="40" y="19" width="1" height="3" fill="#000"/><rect x="50" y="15" width="1" height="7" fill="#000"/><rect x="60" y="19" width="1" height="3" fill="#000"/><rect x="70" y="19" width="1" height="3" fill="#000"/><rect x="80" y="19" width="1" height="3" fill="#000"/><rect x="90" y="19" width="1" height="3" fill="#000"/><rect x="100" y="15" width="1" height="7" fill="#000"/><rect x="110" y="19" width="1" height="3" fill="#000"/><rect x="120" y="19" width="1" height="3" fill="#000"/><rect x="130" y="19" width="1" height="3" fill="#000"/><rect x="140" y="19" width="1" height="3" fill="#000"/><rect x="150" y="15" width="1" height="7" fill="#000"/><rect x="160" y="19" width="1" height="3" fill="#000"/><rect x="170" y="19" width="1" height="3" fill="#000"/><rect x="180" y="19" width="1" height="3" fill="#000"/><rect x="190" y="19" width="1" height="3" fill="#000"/><rect x="200" y="15" width="1" height="7" fill="#000"/><rect x="210" y="19" width="1" height="3" fill="#000"/><rect x="220" y="19" width="1" height="3" fill="#000"/><rect x="230" y="19" width="1" height="3" fill="#000"/><rect x="240" y="19" width="1" height="3" fill="#000"/><rect x="250" y="15" width="1" height="7" fill="#000"/><rect x="260" y="19" width="1" height="3" fill="#000"/><rect x="270" y="19" width="1" height="3" fill="#000"/><rect x="280" y="19" width="1" height="3" fill="#000"/><rect x="290" y="19" width="1" height="3" fill="#000"/><rect x="300" y="15" width="1" height="7" fill="#000"/><rect x="310" y="19" width="1" height="3" fill="#000"/><rect x="320" y="19" width="1" height="3" fill="#000"/><rect x="330" y="19" width="1" height="3" fill="#000"/><rect x="340" y="19" width="1" height="3" fill="#000"/><rect x="350" y="15" width="1" height="7" fill="#000"/><rect x="360" y="19" width="1" height="3" fill="#000"/><rect x="370" y="19" width="1" height="3" fill="#000"/><rect x="380" y="19" width="1" height="3" fill="#000"/><rect x="390" y="19" width="1" height="3" fill="#000"/><rect x="400" y="15" width="1" height="7" fill="#000"/><rect x="410" y="19" width="1" height="3" fill="#000"/><rect x="420" y="19" width="1" height="3" fill="#000"/><rect x="430" y="19" width="1" height="3" fill="#000"/><rect x="440" y="19" width="1" height="3" fill="#000"/><rect x="450" y="15" width="1" height="7" fill="#000"/><rect x="460" y="19" width="1" height="3" fill="#000"/><rect x="470" y="19" width="1" height="3" fill="#000"/><rect x="480" y="19" width="1" height="3" fill="#000"/><rect x="490" y="19" width="1" height="3" fill="#000"/><rect x="500" y="15" width="1" height="7" fill="#000"/><rect x="510" y="19" width="1" height="3" fill="#000"/><rect x="520" y="19" width="1" height="3" fill="#000"/><rect x="530" y="19" width="1" height="3" fill="#000"/><rect x="540" y="19" width="1" height="3" fill="#000"/><rect x="550" y="15" width="1" height="7" fill="#000"/><rect x="560" y="19" width="1" height="3" fill="#000"/><rect x="570" y="19" width="1" height="3" fill="#000"/><rect x="580" y="19" width="1" height="3" fill="#000"/><rect x="590" y="19" width="1" height="3" fill="#000"/><rect x="600" y="15" width="1" height="7" fill="#000"/><rect x="610" y="19" width="1" height="3" fill="#000"/><rect x="620" y="19" width="1" height="3" fill="#000"/><rect x="630" y="19" width="1" height="3" fill="#000"/><rect x="640" y="19" width="1" height="3" fill="#000"/><rect x="650" y="15" width="1" height="7" fill="#000"/><rect x="660" y="19" width="1" height="3" fill="#000"/><rect x="670" y="19" width="1" height="3" fill="#000"/><rect x="680" y="19" width="1" height="3" fill="#000"/><rect x="690" y="19" width="1" height="3" fill="#000"/><rect x="700" y="15" width="1" height="7" fill="#000"/><rect x="710" y="19" width="1" height="3" fill="#000"/><rect x="720" y="19" width="1" height="3" fill="#000"/><rect x="730" y="19" width="1" height="3" fill="#000"/><rect x="740" y="19" width="1" height="3" fill="#000"/><rect x="750" y="15" width="1" height="7" fill="#000"/><rect x="760" y="19" width="1" height="3" fill="#000"/><rect x="770" y="19" width="1" height="3" fill="#000"/><rect x="780" y="19" width="1" height="3" fill="#000"/><rect x="790" y="19" width="1" height="3" fill="#000"/><rect x="800" y="15" width="1" height="7" fill="#000"/><rect x="810" y="19" width="1" height="3" fill="#000"/><rect x="820" y="19" width="1" height="3" fill="#000"/><rect x="830" y="19" width="1" height="3" fill="#000"/><rect x="840" y="19" width="1" height="3" fill="#000"/><rect x="850" y="15" width="1" height="7" fill="#000"/><rect x="860" y="19" width="1" height="3" fill="#000"/><rect x="870" y="19" width="1" height="3" fill="#000"/><rect x="880" y="19" width="1" height="3" fill="#000"/><rect x="890" y="19" width="1" height="3" fill="#000"/><rect x="900" y="15" width="1" height="7" fill="#000"/><rect x="910" y="19" width="1" height="3" fill="#000"/><rect x="920" y="19" width="1" height="3" fill="#000"/><rect x="930" y="19" width="1" height="3" fill="#000"/><rect x="940" y="19" width="1" height="3" fill="#000"/><rect x="950" y="15" width="1" height="7" fill="#000"/><rect x="960" y="19" width="1" height="3" fill="#000"/><rect x="970" y="19" width="1" height="3" fill="#000"/><rect x="980" y="19" width="1" height="3" fill="#000"/><rect x="990" y="19" width="1" height="3" fill="#000"/><rect x="1000" y="15" width="1" height="7" fill="#000"/><rect x="1010" y="19" width="1" height="3" fill="#000"/><rect x="1020" y="19" width="1" height="3" fill="#000"/><rect x="1030" y="19" width="1" height="3" fill="#000"/><rect x="1040" y="19" width="1" height="3" fill="#000"/></svg>
<div style="left:92px;top:113px;width:22px;height:23px;background:#f0f0f0;border-top:1px solid #a0a0a0;border-left:1px solid #a0a0a0"></div>
<div style="left:92px;top:136px;width:22px;height:742px;background:#f0f0f0;border-left:1px solid #a0a0a0"></div>
<div style="left:93px;top:136px;width:21px;height:742px;overflow:hidden"><div class="nw" style="left:-34px;top:736px;width:80px;height:13px;text-align:center;font-size:13px;transform:rotate(-90deg)">-5"</div><div class="nw" style="left:-34px;top:686px;width:80px;height:13px;text-align:center;font-size:13px;transform:rotate(-90deg)">0"</div><div class="nw" style="left:-34px;top:636px;width:80px;height:13px;text-align:center;font-size:13px;transform:rotate(-90deg)">5"</div><div class="nw" style="left:-34px;top:586px;width:80px;height:13px;text-align:center;font-size:13px;transform:rotate(-90deg)">10"</div><div class="nw" style="left:-34px;top:536px;width:80px;height:13px;text-align:center;font-size:13px;transform:rotate(-90deg)">1'-3"</div><div class="nw" style="left:-34px;top:486px;width:80px;height:13px;text-align:center;font-size:13px;transform:rotate(-90deg)">1'-8"</div><div class="nw" style="left:-34px;top:436px;width:80px;height:13px;text-align:center;font-size:13px;transform:rotate(-90deg)">2'-1"</div><div class="nw" style="left:-34px;top:386px;width:80px;height:13px;text-align:center;font-size:13px;transform:rotate(-90deg)">2'-6"</div><div class="nw" style="left:-34px;top:336px;width:80px;height:13px;text-align:center;font-size:13px;transform:rotate(-90deg)">2'-11"</div><div class="nw" style="left:-34px;top:286px;width:80px;height:13px;text-align:center;font-size:13px;transform:rotate(-90deg)">3'-4"</div><div class="nw" style="left:-34px;top:236px;width:80px;height:13px;text-align:center;font-size:13px;transform:rotate(-90deg)">3'-9"</div><div class="nw" style="left:-34px;top:186px;width:80px;height:13px;text-align:center;font-size:13px;transform:rotate(-90deg)">4'-2"</div><div class="nw" style="left:-34px;top:136px;width:80px;height:13px;text-align:center;font-size:13px;transform:rotate(-90deg)">4'-7"</div><div class="nw" style="left:-34px;top:86px;width:80px;height:13px;text-align:center;font-size:13px;transform:rotate(-90deg)">5'-0"</div><div class="nw" style="left:-34px;top:36px;width:80px;height:13px;text-align:center;font-size:13px;transform:rotate(-90deg)">5'-5"</div><div class="nw" style="left:-34px;top:-14px;width:80px;height:13px;text-align:center;font-size:13px;transform:rotate(-90deg)">5'-10"</div></div>
<svg style="left:92px;top:136px" width="22" height="742" shape-rendering="crispEdges"><rect x="21" y="0" width="1" height="742" fill="#fff"/><rect x="19" y="2" width="3" height="1" fill="#000"/><rect x="19" y="12" width="3" height="1" fill="#000"/><rect x="19" y="22" width="3" height="1" fill="#000"/><rect x="19" y="32" width="3" height="1" fill="#000"/><rect x="15" y="42" width="7" height="1" fill="#000"/><rect x="19" y="52" width="3" height="1" fill="#000"/><rect x="19" y="62" width="3" height="1" fill="#000"/><rect x="19" y="72" width="3" height="1" fill="#000"/><rect x="19" y="82" width="3" height="1" fill="#000"/><rect x="15" y="92" width="7" height="1" fill="#000"/><rect x="19" y="102" width="3" height="1" fill="#000"/><rect x="19" y="112" width="3" height="1" fill="#000"/><rect x="19" y="122" width="3" height="1" fill="#000"/><rect x="19" y="132" width="3" height="1" fill="#000"/><rect x="15" y="142" width="7" height="1" fill="#000"/><rect x="19" y="152" width="3" height="1" fill="#000"/><rect x="19" y="162" width="3" height="1" fill="#000"/><rect x="19" y="172" width="3" height="1" fill="#000"/><rect x="19" y="182" width="3" height="1" fill="#000"/><rect x="15" y="192" width="7" height="1" fill="#000"/><rect x="19" y="202" width="3" height="1" fill="#000"/><rect x="19" y="212" width="3" height="1" fill="#000"/><rect x="19" y="222" width="3" height="1" fill="#000"/><rect x="19" y="232" width="3" height="1" fill="#000"/><rect x="15" y="242" width="7" height="1" fill="#000"/><rect x="19" y="252" width="3" height="1" fill="#000"/><rect x="19" y="262" width="3" height="1" fill="#000"/><rect x="19" y="272" width="3" height="1" fill="#000"/><rect x="19" y="282" width="3" height="1" fill="#000"/><rect x="15" y="292" width="7" height="1" fill="#000"/><rect x="19" y="302" width="3" height="1" fill="#000"/><rect x="19" y="312" width="3" height="1" fill="#000"/><rect x="19" y="322" width="3" height="1" fill="#000"/><rect x="19" y="332" width="3" height="1" fill="#000"/><rect x="15" y="342" width="7" height="1" fill="#000"/><rect x="19" y="352" width="3" height="1" fill="#000"/><rect x="19" y="362" width="3" height="1" fill="#000"/><rect x="19" y="372" width="3" height="1" fill="#000"/><rect x="19" y="382" width="3" height="1" fill="#000"/><rect x="15" y="392" width="7" height="1" fill="#000"/><rect x="19" y="402" width="3" height="1" fill="#000"/><rect x="19" y="412" width="3" height="1" fill="#000"/><rect x="19" y="422" width="3" height="1" fill="#000"/><rect x="19" y="432" width="3" height="1" fill="#000"/><rect x="15" y="442" width="7" height="1" fill="#000"/><rect x="19" y="452" width="3" height="1" fill="#000"/><rect x="19" y="462" width="3" height="1" fill="#000"/><rect x="19" y="472" width="3" height="1" fill="#000"/><rect x="19" y="482" width="3" height="1" fill="#000"/><rect x="15" y="492" width="7" height="1" fill="#000"/><rect x="19" y="502" width="3" height="1" fill="#000"/><rect x="19" y="512" width="3" height="1" fill="#000"/><rect x="19" y="522" width="3" height="1" fill="#000"/><rect x="19" y="532" width="3" height="1" fill="#000"/><rect x="15" y="542" width="7" height="1" fill="#000"/><rect x="19" y="552" width="3" height="1" fill="#000"/><rect x="19" y="562" width="3" height="1" fill="#000"/><rect x="19" y="572" width="3" height="1" fill="#000"/><rect x="19" y="582" width="3" height="1" fill="#000"/><rect x="15" y="592" width="7" height="1" fill="#000"/><rect x="19" y="602" width="3" height="1" fill="#000"/><rect x="19" y="612" width="3" height="1" fill="#000"/><rect x="19" y="622" width="3" height="1" fill="#000"/><rect x="19" y="632" width="3" height="1" fill="#000"/><rect x="15" y="642" width="7" height="1" fill="#000"/><rect x="19" y="652" width="3" height="1" fill="#000"/><rect x="19" y="662" width="3" height="1" fill="#000"/><rect x="19" y="672" width="3" height="1" fill="#000"/><rect x="19" y="682" width="3" height="1" fill="#000"/><rect x="15" y="692" width="7" height="1" fill="#000"/><rect x="19" y="702" width="3" height="1" fill="#000"/><rect x="19" y="712" width="3" height="1" fill="#000"/><rect x="19" y="722" width="3" height="1" fill="#000"/><rect x="19" y="732" width="3" height="1" fill="#000"/></svg>
<svg style="left:895px;top:129px" width="7" height="4" ><path d="M0 0H6L3 3Z" fill="#000"/></svg>
<svg style="left:107px;top:149px" width="4" height="7" ><path d="M0 0V6L3 3Z" fill="#000"/></svg>
<div style="left:631px;top:113px;width:524px;height:1px;background:#a8a8a8"></div><div style="left:631px;top:91px;width:1px;height:23px;background:#c8c8c8"></div>
<div style="left:1155px;top:113px;width:17px;height:23px;background:#f0f0f0;border-top:2px solid #9a9a9a;border-left:1px solid #a0a0a0;border-right:1px solid #fff;border-bottom:1px solid #fff"></div>
<div style="left:1155px;top:136px;width:17px;height:742px;background:#f0f0f0"></div>
<div style="left:1156px;top:201px;width:15px;height:328px;background:#cdcdcd"></div>
<svg style="left:1159px;top:141px" width="10" height="8" ><path d="M1 6L5 2L9 6" stroke="#606060" stroke-width="2" fill="none"/></svg>
<svg style="left:1159px;top:865px" width="10" height="8" ><path d="M1 2L5 6L9 2" stroke="#606060" stroke-width="2" fill="none"/></svg>
<div style="left:92px;top:878px;width:1080px;height:20px;background:#f0f0f0"></div>
<div style="left:114px;top:878px;width:1041px;height:1px;background:#fff"></div>
<div style="left:92px;top:878px;width:22px;height:20px;background:#f0f0f0;border-left:1px solid #a0a0a0;border-top:1px solid #a0a0a0;border-right:1px solid #fff;border-bottom:1px solid #fff"></div>
<div style="left:468px;top:879px;width:627px;height:15px;background:#cdcdcd"></div>
<svg style="left:117px;top:882px" width="8" height="10" ><path d="M6 1L2 5L6 9" stroke="#606060" stroke-width="2" fill="none"/></svg>
<svg style="left:1100px;top:882px" width="8" height="10" ><path d="M2 1L6 5L2 9" stroke="#606060" stroke-width="2" fill="none"/></svg>
<div class="nw" style="left:1133px;top:881px;font-size:11px">1" &lt; 10"</div>
<div style="left:92px;top:898px;width:1080px;height:40px;background:#fff;border-left:1px solid #828790;border-right:1px solid #828790"></div>
<div class="nw" style="left:97px;top:904px;font-size:10.8px"><i style="color:#2424f0">Command:</i> <span style="color:#0c0cc0">new</span></div>
<div class="nw" style="left:97px;top:917px;font-size:10.8px"><i style="color:#2424f0">Command:</i> <span style="color:#0c0cc0">new</span></div>
<div style="left:92px;top:937px;width:1080px;height:26px;background:#fff;border:1px solid #828790"></div>
<div class="nw" style="left:93px;top:946px;font-size:10.8px">Command:</div>
<div style="left:1149px;top:941px;width:21px;height:20px;background:#e0e0e0;border:1px solid #a8a8a8"></div>
<div style="left:1178px;top:92px;width:19px;height:93px;background:#f0f0f0;border:1px solid #d9d9d9;border-right:none"></div>
<div style="left:1176px;top:185px;width:21px;height:71px;background:#fff;border:1px solid #d9d9d9;border-right:none"></div>
<div class="nw" style="left:1142px;top:132px;width:96px;height:14px;text-align:center;font-size:11px;transform:rotate(-90deg)">Property Editor</div>
<div class="nw" style="left:1141px;top:216px;width:96px;height:14px;text-align:center;font-size:10.5px;transform:rotate(-90deg)">Layer List</div>
<div style="left:1196px;top:90px;width:1px;height:567px;background:#8a8e96"></div>
<div style="left:1197px;top:91px;width:256px;height:19px;background:#dcdcdc;border:1px solid #cfcfcf;border-left:none"></div>
<div class="nw" style="left:1201px;top:96px;font-size:11px">Layer List</div>
<svg style="left:1422px;top:95px" width="26" height="12" ><path d="M2.5 4.5h5v5h-5z M4.5 4.5v-3h5v5h-2" stroke="#000" stroke-width="1.3" fill="none" shape-rendering="crispEdges"/><path d="M17 2L24 9M24 2L17 9" stroke="#000" stroke-width="1.4"/></svg>
<div class="lb" style="left:1198px;top:113px;width:49px;height:20px"></div>
<svg style="left:1198px;top:113px" width="49" height="20" ><ellipse cx="24.5" cy="9.5" rx="7.6" ry="5.4" fill="#000"/><ellipse cx="24.5" cy="10.4" rx="4.9" ry="3.1" fill="#fff"/><circle cx="24.5" cy="9.4" r="2.3" fill="#000"/></svg>
<div class="lb" style="left:1249px;top:113px;width:49px;height:20px"></div>
<svg style="left:1249px;top:113px" width="49" height="20" ><ellipse cx="24.5" cy="9.5" rx="7.6" ry="5.4" fill="#a0a0a0"/><ellipse cx="24.5" cy="10.4" rx="4.9" ry="3.1" fill="#fff"/><circle cx="24.5" cy="9.4" r="2.3" fill="#a0a0a0"/></svg>
<div class="lb" style="left:1300px;top:113px;width:49px;height:20px"></div>
<svg style="left:1300px;top:113px" width="49" height="20" ><path d="M18.5 10h12M24.5 4.3v11.5" stroke="#f00" stroke-width="2.9"/></svg>
<div class="lbd" style="left:1351px;top:113px;width:49px;height:20px"></div>
<svg style="left:1351px;top:113px" width="49" height="20" ><rect x="18.5" y="8" width="12" height="3.5" rx="1" fill="#909090"/></svg>
<div class="lb" style="left:1402px;top:113px;width:49px;height:20px"></div>
<svg style="left:1402px;top:113px" width="49" height="20" ><path d="M17.5 17l1.2-4 11-11 2.8 2.8-11 11z" fill="#e8b040" stroke="#9a7010" stroke-width=".6"/><path d="M28.5 3l1.4-1.4 2.8 2.8-1.4 1.4z" fill="#e02020"/></svg>
<div style="left:1197px;top:134px;width:256px;height:523px;background:#fff;border:1px solid #828790;border-left:none"></div>
<div style="left:1197px;top:135px;width:255px;height:17px;background:#d9d9d9"></div>
<div style="left:1201px;top:139px;width:16px;height:9px;background:#c8e0f8;border:1px solid #1a2a50"></div>
<div class="nw" style="left:1222px;top:139px;font-size:12px">0</div>
<div style="left:1176px;top:662px;width:277px;height:19px;background:#dcdcdc;border:1px solid #cfcfcf"></div>
<div class="nw" style="left:1180px;top:668px;font-size:10.6px">Block List</div>
<svg style="left:1422px;top:666px" width="26" height="12" ><path d="M2.5 4.5h5v5h-5z M4.5 4.5v-3h5v5h-2" stroke="#000" stroke-width="1.3" fill="none" shape-rendering="crispEdges"/><path d="M17 2L24 9M24 2L17 9" stroke="#000" stroke-width="1.4"/></svg>
<div class="lb" style="left:1177px;top:684px;width:33px;height:20px"></div>
<svg style="left:1177px;top:684px" width="33" height="20" ><ellipse cx="16.5" cy="9.5" rx="7.6" ry="5.4" fill="#000"/><ellipse cx="16.5" cy="10.4" rx="4.9" ry="3.1" fill="#fff"/><circle cx="16.5" cy="9.4" r="2.3" fill="#000"/></svg>
<div class="lb" style="left:1212px;top:684px;width:33px;height:20px"></div>
<svg style="left:1212px;top:684px" width="33" height="20" ><ellipse cx="16.5" cy="9.5" rx="7.6" ry="5.4" fill="#a0a0a0"/><ellipse cx="16.5" cy="10.4" rx="4.9" ry="3.1" fill="#fff"/><circle cx="16.5" cy="9.4" r="2.3" fill="#a0a0a0"/></svg>
<div class="lb" style="left:1246px;top:684px;width:33px;height:20px"></div>
<svg style="left:1246px;top:684px" width="33" height="20" ><path d="M10.5 10h12M16.5 4.3v11.5" stroke="#f00" stroke-width="2.9"/></svg>
<div class="lbd" style="left:1281px;top:684px;width:33px;height:20px"></div>
<svg style="left:1281px;top:684px" width="33" height="20" ><rect x="10.5" y="8" width="12" height="3.5" rx="1" fill="#909090"/></svg>
<div class="lbd" style="left:1316px;top:684px;width:33px;height:20px"></div>
<svg style="left:1316px;top:684px" width="33" height="20" ><text x="16" y="15" font-family="Liberation Sans" font-size="11" fill="#808080" text-anchor="middle">a b</text><path d="M16.5 4v13" stroke="#808080"/></svg>
<div class="lb" style="left:1350px;top:684px;width:33px;height:20px"></div>
<svg style="left:1350px;top:684px" width="33" height="20" ><path d="M9.5 17l1.2-4 11-11 2.8 2.8-11 11z" fill="#e8b040" stroke="#9a7010" stroke-width=".6"/><path d="M20.5 3l1.4-1.4 2.8 2.8-1.4 1.4z" fill="#e02020"/></svg>
<div class="lbd" style="left:1385px;top:684px;width:33px;height:20px"></div>
<svg style="left:1385px;top:684px" width="33" height="20" ><rect x="11" y="3" width="9" height="15" fill="#f4f4f4"/><path d="M13.5 4.5c3 0 3 2 3 4v5h2l-3 3.5-3-3.5h2v-5c0-1-.5-2-1-2z" fill="#a0a0a0"/></svg>
<div class="lb" style="left:1419px;top:684px;width:33px;height:20px"></div>
<svg style="left:1419px;top:684px" width="33" height="20" ><rect x="11.5" y="5.5" width="10" height="10" fill="#f08060" stroke="#e04030"/><path d="M14 8l5 5M19 8l-5 5" stroke="#fff" stroke-width="1.6"/></svg>
<div style="left:1176px;top:705px;width:277px;height:258px;background:#fff;border:1px solid #828790"></div>
<div class="nw" style="left:1224px;top:709px;font-size:12px">Model (*Model_Space)</div>
<div class="nw" style="left:1224px;top:726px;font-size:12px;letter-spacing:-.35px">Layout1 (*Paper_Space)</div>
<div class="hd" style="left:1457px;top:94px"></div>
<div class="hd" style="left:1461px;top:94px"></div>
<div class="hd" style="left:1465px;top:94px"></div>
<div class="hd" style="left:1469px;top:94px"></div>
<div class="hd" style="left:1473px;top:94px"></div>
<div class="hd" style="left:1477px;top:94px"></div>
<div class="hd" style="left:1481px;top:94px"></div>
<div style="left:1455px;top:100px;width:29px;height:29px;border:1px solid #707070;background:linear-gradient(#8e8e8e,#c8c8c8 40%,#e8e8e8)"></div>
<div style="left:1455px;top:129px;width:29px;height:29px;border:1px solid #707070;background:linear-gradient(#8e8e8e,#c8c8c8 40%,#e8e8e8)"></div>
<svg style="left:1458px;top:103px" width="22" height="22" ><rect x="1.5" y="1.5" width="19.5" height="19.5" rx="2" fill="#fff" stroke="#a8a8a8"/><rect x="2" y="2" width="18.5" height="3.5" fill="#000"/><rect x="2.5" y="2.5" width="2" height="2" fill="#fff"/><path d="M6 10l5-3v9l-5 3z" fill="#909090"/><path d="M9 9l7-4v9l-7 4z" fill="#f0f0f0" stroke="#a0a0a0" stroke-width=".6"/><path d="M12 14l3-6v5z" fill="#f07070"/></svg>
<svg style="left:1458px;top:132px" width="22" height="22" ><rect x="1.5" y="1.5" width="19.5" height="19.5" rx="2" fill="#fff" stroke="#a8a8a8"/><rect x="2" y="2" width="18.5" height="3.5" fill="#000"/><rect x="2.5" y="2.5" width="2" height="2" fill="#fff"/><rect x="6" y="9" width="8" height="6" fill="#f0e0a8" stroke="#b0a070" stroke-width=".6"/><circle cx="13" cy="14" r="3.5" fill="#f0e0a8" stroke="#b0a070" stroke-width=".6"/></svg>
<svg style="left:1457px;top:160px" width="22" height="22" ><rect x="1.5" y="1.5" width="19.5" height="19.5" rx="2" fill="#fff" stroke="#a8a8a8"/><rect x="2" y="2" width="18.5" height="3.5" fill="#000"/><rect x="2.5" y="2.5" width="2" height="2" fill="#fff"/><rect x="5" y="9" width="12" height="9" rx="1.5" fill="#f8f6f0" stroke="#c0d0e8" stroke-width=".8"/></svg>
<div style="left:1458px;top:189px;width:24px;height:1px;background:#d8d8d8"></div>
<div style="left:1455px;top:193px;width:29px;height:29px;border:1px solid #707070;background:linear-gradient(#8e8e8e,#c8c8c8 40%,#e8e8e8)"></div>
<svg style="left:1458px;top:196px" width="22" height="22" ><rect x="1.5" y="1.5" width="19.5" height="19.5" rx="2" fill="#fff" stroke="#a8a8a8"/><rect x="2" y="2" width="18.5" height="3.5" fill="#000"/><rect x="2.5" y="2.5" width="2" height="2" fill="#fff"/><rect x="4" y="8" width="3" height="2.5" fill="#000"/><rect x="4" y="12" width="3" height="2.5" fill="#000"/><rect x="4" y="16" width="3" height="2.5" fill="#000"/><rect x="9" y="8" width="10" height="2.5" fill="#e0e0e0" stroke="#999" stroke-width=".5"/><rect x="9" y="12" width="10" height="2.5" fill="#fff" stroke="#555" stroke-width=".5"/><rect x="9" y="16" width="10" height="2.5" fill="#e0e0e0" stroke="#999" stroke-width=".5"/></svg>
<svg style="left:1457px;top:225px" width="22" height="22" ><rect x="1.5" y="1.5" width="19.5" height="19.5" rx="2" fill="#fff" stroke="#a8a8a8"/><rect x="2" y="2" width="18.5" height="3.5" fill="#000"/><rect x="2.5" y="2.5" width="2" height="2" fill="#fff"/><path d="M5 9c0-2 12-2 12 0l-4 4v6l-4-2v-4z" fill="#a0a0a0"/><ellipse cx="11" cy="9" rx="6" ry="1.5" fill="#808080"/></svg>
<svg style="left:1457px;top:254px" width="22" height="22" ><rect x="1.5" y="1.5" width="19.5" height="19.5" rx="2" fill="#fff" stroke="#a8a8a8"/><rect x="2" y="2" width="18.5" height="3.5" fill="#000"/><rect x="2.5" y="2.5" width="2" height="2" fill="#fff"/><path d="M4 13h15" stroke="#f08080" stroke-width=".6"/><path d="M7 8v10M7 8l4 3v4l-4 3" fill="none" stroke="#333" stroke-width=".8"/><rect x="11" y="10" width="5" height="6" fill="#555"/></svg>
<div style="left:1458px;top:282px;width:24px;height:1px;background:#d8d8d8"></div>
<div style="left:1455px;top:286px;width:29px;height:29px;border:1px solid #707070;background:linear-gradient(#8e8e8e,#c8c8c8 40%,#e8e8e8)"></div>
<svg style="left:1458px;top:289px" width="22" height="22" ><rect x="1.5" y="1.5" width="19.5" height="19.5" rx="2" fill="#fff" stroke="#a8a8a8"/><rect x="2" y="2" width="18.5" height="3.5" fill="#000"/><rect x="2.5" y="2.5" width="2" height="2" fill="#fff"/><path d="M5 8h7M5 10.5h7M5 13h8M5 15.5h7" stroke="#bbb" stroke-width=".7"/><rect x="3" y="17.5" width="16" height="3" fill="#fff" stroke="#999" stroke-width=".5"/></svg>
<svg style="left:1457px;top:318px" width="22" height="22" ><rect x="1.5" y="1.5" width="19.5" height="19.5" rx="2" fill="#fff" stroke="#a8a8a8"/><rect x="2" y="2" width="18.5" height="3.5" fill="#000"/><rect x="2.5" y="2.5" width="2" height="2" fill="#fff"/><rect x="6" y="8" width="10" height="12" rx="1" fill="#c8a050"/><rect x="7.5" y="10" width="7" height="9" fill="#fafafa"/><rect x="8.5" y="7" width="5" height="3" fill="#888"/></svg>
<div style="left:8px;top:963px;width:1478px;height:44px;background:#f0f0f0"></div>
<div class="nw" style="left:10px;top:971px;font-size:12.3px">6'-1.4",5'-7.5"</div>
<div class="nw" style="left:10px;top:991px;font-size:12.3px">@6'-1.4",5'-7.5"</div>
<div style="left:256px;top:966px;width:1px;height:40px;background:#a0a0a0"></div>
<div class="nw" style="left:260px;top:971px;font-size:11.8px">8'-3.7187"&lt;43°</div>
<div class="nw" style="left:260px;top:991px;font-size:11.8px">@8'-3.7187"&lt;43°</div>
<div class="nw" style="left:582px;top:980px;font-size:12px">Select entity or region</div>
<div class="nw" style="left:938px;top:980px;font-size:12px">No entities selected.</div>
<div style="left:1468px;top:966px;width:1px;height:40px;background:#d0d0d0"></div>
<svg style="left:1473px;top:996px" width="12" height="12" ><g fill="#b8b8b8"><rect x="8" y="2" width="2" height="2"/><rect x="5" y="5" width="2" height="2"/><rect x="8" y="5" width="2" height="2"/><rect x="2" y="8" width="2" height="2"/><rect x="5" y="8" width="2" height="2"/><rect x="8" y="8" width="2" height="2"/></g></svg>
</body></html>
